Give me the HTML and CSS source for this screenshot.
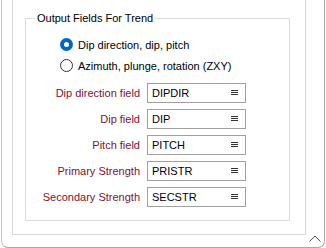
FILE: index.html
```html
<!DOCTYPE html>
<html lang="en">
<head>
  <meta charset="UTF-8" />
  <meta name="viewport" content="width=device-width, initial-scale=1.0"/>
  <title>Output Fields For Trend</title>
  <link rel="stylesheet" href="styles.css">
</head>
<body>
  <div class="painel">
    <div class="interno">
      <fieldset class="grupo">
        <legend>Output Fields For Trend</legend>

        <div class="opcoes">
          <label class="opcao"><span class="radio marcado"></span>Dip direction, dip, pitch</label>
          <label class="opcao"><span class="radio"></span>Azimuth, plunge, rotation (ZXY)</label>
        </div>

        <div class="campos">
          <span class="rotulo">Dip direction field</span>
          <div class="caixa">
            <span>DIPDIR</span>
            <svg class="lista" width="7" height="6" viewBox="0 0 7 6"><path d="M0 0.5H7M0 2.5H7M0 4.5H7"/></svg>
          </div>

          <span class="rotulo">Dip field</span>
          <div class="caixa">
            <span>DIP</span>
            <svg class="lista" width="7" height="6" viewBox="0 0 7 6"><path d="M0 0.5H7M0 2.5H7M0 4.5H7"/></svg>
          </div>

          <span class="rotulo">Pitch field</span>
          <div class="caixa">
            <span>PITCH</span>
            <svg class="lista" width="7" height="6" viewBox="0 0 7 6"><path d="M0 0.5H7M0 2.5H7M0 4.5H7"/></svg>
          </div>

          <span class="rotulo">Primary Strength</span>
          <div class="caixa">
            <span>PRISTR</span>
            <svg class="lista" width="7" height="6" viewBox="0 0 7 6"><path d="M0 0.5H7M0 2.5H7M0 4.5H7"/></svg>
          </div>

          <span class="rotulo">Secondary Strength</span>
          <div class="caixa">
            <span>SECSTR</span>
            <svg class="lista" width="7" height="6" viewBox="0 0 7 6"><path d="M0 0.5H7M0 2.5H7M0 4.5H7"/></svg>
          </div>
        </div>
      </fieldset>
    </div>

    <!-- botao de recolher no canto -->
    <svg class="recolher" width="12" height="7" viewBox="0 0 12 7"><polyline points="0.5,6.5 6,1 11.5,6.5"/></svg>
  </div>
</body>
</html>
```

FILE: styles.css
```css
 * {
   box-sizing: border-box;
   margin: 0;
   padding: 0;
   font-family: "Liberation Sans", Arial, sans-serif;
 }

 body {
   background: #fff;
   color: #000;
   font-size: 11px;
 }

 .painel {
   position: relative;
   margin-left: 1px;
   width: 324px;
   height: 248px;
   border: 1px solid #c8c8c8;
   border-top: none;
   border-right-color: #a9a9a9;
   border-bottom-color: #a9a9a9;
   border-radius: 0 0 7px 7px;
   padding: 0 18px 12px 10px;
 }

 .interno {
   height: 100%;
   display: flex;
   flex-direction: column;
   border: 1px solid #d9d9d9;
   border-top: none;
   padding: 0 15px 13px 12px;
 }

 .grupo {
   flex: 1;
   margin-top: 11px;
   border: 1px solid #dcdcdc;
   padding: 0;
   min-width: 0;
 }

 .grupo legend {
   margin-left: 9px;
   padding: 0 2px;
   line-height: 14px;
   font-size: 11px;
   color: #000;
 }

 .opcoes {
   padding: 9px 0 0 34px;
 }

 .opcao {
   display: flex;
   align-items: center;
   gap: 5px;
   height: 21px;
 }

 .radio {
   width: 13px;
   height: 13px;
   border-radius: 50%;
   border: 1px solid #333;
   background: #fff;
 }

 .radio.marcado {
   border: 4px solid #0067c0;
   background: #fff;
 }

 .campos {
   margin-top: 7px;
   display: grid;
   grid-template-columns: 114px 99px;
   column-gap: 7px;
   row-gap: 6px;
 }

 .rotulo {
   text-align: right;
   line-height: 20px;
   color: #7d1236;
 }

 .caixa {
   height: 20px;
   display: flex;
   align-items: center;
   justify-content: space-between;
   border: 1px solid #a0a0a0;
   padding: 0 7px 0 4px;
   color: #000;
 }

 .lista path {
   stroke: #333;
   stroke-width: 1;
 }

 .recolher {
   position: absolute;
   left: 307px;
   top: 235px;
 }

 .recolher polyline {
   fill: none;
   stroke: #555;
   stroke-width: 1;
 }
```
